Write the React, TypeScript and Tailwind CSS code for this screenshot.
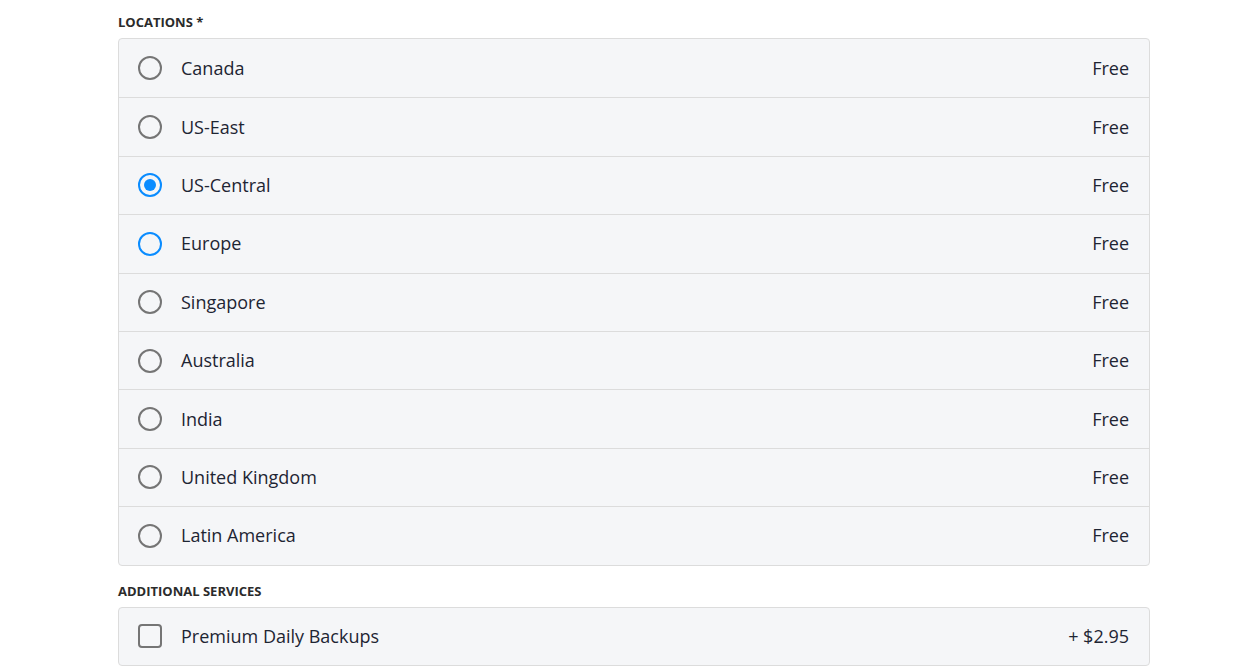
import React, { useState } from 'react';

const locations = [
  'Canada',
  'US-East',
  'US-Central',
  'Europe',
  'Singapore',
  'Australia',
  'India',
  'United Kingdom',
  'Latin America',
];

const Radio: React.FC<{ checked: boolean; focused: boolean }> = ({ checked, focused }) => (
  <span
    className={`flex h-6 w-6 shrink-0 items-center justify-center rounded-full border-2 ${
      checked || focused ? 'border-[#0a8cff]' : 'border-[#757575]'
    }`}
  >
    {checked && <span className="h-3 w-3 rounded-full bg-[#0a8cff]" />}
  </span>
);

const App: React.FC = () => {
  const [selected, setSelected] = useState('US-Central');
  const [backups, setBackups] = useState(false);

  return (
    <div className="min-h-screen bg-white font-['Open_Sans',sans-serif] text-[#1e2533]">
      <div className="ml-[118px] w-[1032px] pt-[14px]">
        <div className="text-[13px] font-bold leading-4 text-[#2b2b2b]">LOCATIONS *</div>
        <div className="mt-[8px] overflow-hidden rounded-[4px] border border-[#dcdcdc] bg-[#f5f6f8]">
          {locations.map((loc, i) => (
            <div
              key={loc}
              onClick={() => setSelected(loc)}
              className={`flex h-[58.4px] cursor-pointer items-center pl-[19px] pr-[20px] ${
                i > 0 ? 'border-t border-[#dcdcdc]' : ''
              }`}
            >
              <Radio checked={selected === loc} focused={loc === 'Europe'} />
              <span className="ml-[19px] text-[18px]">{loc}</span>
              <span className="ml-auto text-[18px]">Free</span>
            </div>
          ))}
        </div>

        <div className="mt-[17px] text-[13px] font-bold leading-4 text-[#2b2b2b]">ADDITIONAL SERVICES</div>
        <div
          onClick={() => setBackups(!backups)}
          className="mt-[8px] flex h-[59px] cursor-pointer items-center rounded-[4px] border border-[#dcdcdc] bg-[#f5f6f8] pl-[19px] pr-[20px]"
        >
          <span className="flex h-6 w-6 shrink-0 items-center justify-center rounded-[4px] border-2 border-[#757575]">
            {backups && <span className="h-3 w-3 bg-[#0a8cff]" />}
          </span>
          <span className="ml-[19px] text-[18px]">Premium Daily Backups</span>
          <span className="ml-auto text-[18px]">+ $2.95</span>
        </div>
      </div>
    </div>
  );
};

export default App;
